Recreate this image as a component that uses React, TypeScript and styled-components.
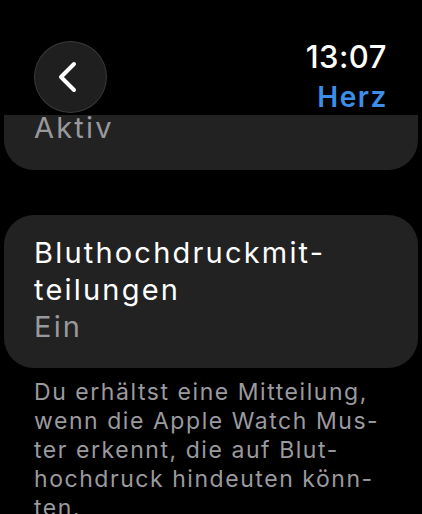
import React from "react";
import styled, { createGlobalStyle } from "styled-components";

const GlobalStyle = createGlobalStyle`
  html, body {
    margin: 0;
    padding: 0;
    background: #000;
  }
  body {
    font-family: Inter, "Noto Sans", "Liberation Sans", sans-serif;
    -webkit-font-smoothing: antialiased;
  }
`;

const Screen = styled.div`
  width: 422px;
  height: 514px;
  overflow: hidden;
  background: #000;
  display: flex;
  flex-direction: column;
`;

const Header = styled.header`
  height: 115px;
  flex: none;
  display: flex;
  align-items: flex-start;
  justify-content: space-between;
  padding: 0 35px 0 34px;
  box-sizing: border-box;
  background: #000;
`;

const BackButton = styled.button`
  margin-top: 41px;
  width: 73px;
  height: 72px;
  border-radius: 50%;
  background: #1f1f1f;
  border: 1.5px solid #3a3a3a;
  box-sizing: border-box;
  display: flex;
  align-items: center;
  justify-content: center;
  padding: 0 6px 0 0;
  cursor: pointer;
`;

const TitleBlock = styled.div`
  display: flex;
  flex-direction: column;
  align-items: flex-end;
  margin-top: 38px;
`;

const Clock = styled.div`
  color: #fff;
  font-size: 31px;
  font-weight: 500;
  line-height: 38px;
  letter-spacing: 0.5px;
`;

const AppTitle = styled.div`
  color: #3d8ee8;
  font-size: 28px;
  font-weight: 600;
  line-height: 43px;
  letter-spacing: 1.6px;
  margin-right: -1px;
`;

const List = styled.div`
  display: flex;
  flex-direction: column;
  padding: 0 4px;
`;

const Card = styled.div<{ $clipped?: boolean }>`
  background: #222222;
  border-radius: ${(p) => (p.$clipped ? "0 0 30px 30px" : "30px")};
  padding: ${(p) => (p.$clipped ? "0 30px" : "19px 30px 23px")};
  height: ${(p) => (p.$clipped ? "55px" : "auto")};
  box-sizing: border-box;
  overflow: hidden;
`;

const RowTitle = styled.div`
  color: #fff;
  font-size: 29px;
  line-height: 37px;
  letter-spacing: 2.2px;
`;

const RowValue = styled.div<{ $shift?: number }>`
  color: #98989d;
  font-size: 29px;
  line-height: 37px;
  letter-spacing: 2.2px;
  margin-top: ${(p) => p.$shift ?? 0}px;
`;

const Gap = styled.div`
  height: 45px;
`;

const Footnote = styled.p`
  margin: 10px 0 0;
  padding: 0 34px;
  color: #9a9a9f;
  font-size: 23px;
  line-height: 29px;
  letter-spacing: 1.55px;
`;

const Chevron = () => (
  <svg width="20" height="32" viewBox="0 0 20 32" fill="none">
    <path
      d="M16 3 L3 16 L16 29"
      stroke="#fff"
      strokeWidth="4"
      strokeLinecap="round"
      strokeLinejoin="round"
    />
  </svg>
);

export default function App() {
  return (
    <>
      <GlobalStyle />
      <Screen>
        <Header>
          <BackButton aria-label="Zurück">
            <Chevron />
          </BackButton>
          <TitleBlock>
            <Clock>13:07</Clock>
            <AppTitle>Herz</AppTitle>
          </TitleBlock>
        </Header>
        <List>
          <Card $clipped>
            <RowValue $shift={-6}>Aktiv</RowValue>
          </Card>
          <Gap />
          <Card>
            <RowTitle>
              Bluthochdruckmit-
              <br />
              teilungen
            </RowTitle>
            <RowValue>Ein</RowValue>
          </Card>
        </List>
        <Footnote>
          Du erhältst eine Mitteilung,
          <br />
          wenn die Apple Watch Mus-
          <br />
          ter erkennt, die auf Blut-
          <br />
          hochdruck hindeuten könn-
          <br />
          ten.
        </Footnote>
      </Screen>
    </>
  );
}
